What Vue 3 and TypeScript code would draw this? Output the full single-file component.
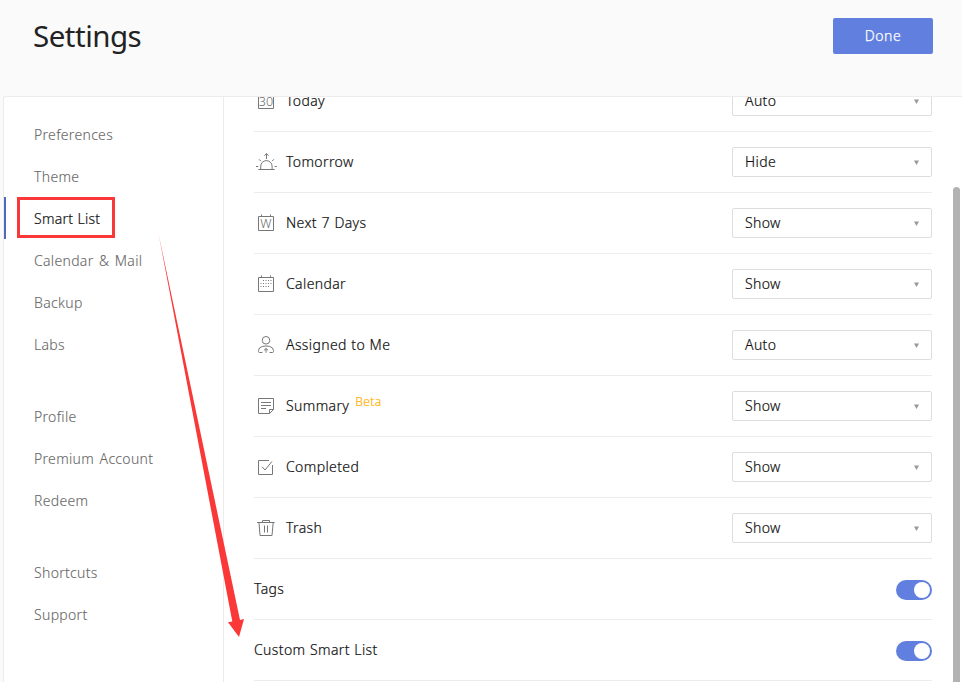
<script setup lang="ts">
import { ref } from 'vue'

interface SmartItem {
  icon: string
  label: string
  value: string
  beta?: boolean
}

const navGroups: string[][] = [
  ['Preferences', 'Theme', 'Smart List', 'Calendar & Mail', 'Backup', 'Labs'],
  ['Profile', 'Premium Account', 'Redeem'],
  ['Shortcuts', 'Support'],
]
const active = ref('Smart List')

const items: SmartItem[] = [
  { icon: 'today', label: 'Today', value: 'Auto' },
  { icon: 'tomorrow', label: 'Tomorrow', value: 'Hide' },
  { icon: 'week', label: 'Next 7 Days', value: 'Show' },
  { icon: 'calendar', label: 'Calendar', value: 'Show' },
  { icon: 'assigned', label: 'Assigned to Me', value: 'Auto' },
  { icon: 'summary', label: 'Summary', value: 'Show', beta: true },
  { icon: 'completed', label: 'Completed', value: 'Show' },
  { icon: 'trash', label: 'Trash', value: 'Show' },
]

const toggles = ref([
  { label: 'Tags', on: true },
  { label: 'Custom Smart List', on: true },
])

const paths: Record<string, string> = {
  today: 'M4.5 5.5h15v14h-15zM7.5 3.5v2M16.5 3.5v2',
  tomorrow:
    'M4.3 19.5h16.4M2 16.5h2.2M20.6 16.5h2.2M6.7 19.5v-3.2a5.7 5.7 0 0 1 11.4 0v3.2M5 9.3l1.8 1.8M19.9 9.3l-1.8 1.8M12.5 3.6v5.4M10.4 5.7l2.1-2.1 2.1 2.1',
  week: 'M4.5 5.5h15v14h-15zM7.5 3.5v2M16.5 3.5v2',
  calendar: 'M4.5 5.5h15v14h-15zM7.5 3.5v2M16.5 3.5v2',
  assigned:
    'M12 3.5a3.8 3.8 0 1 1 0 7.6a3.8 3.8 0 0 1 0-7.6zM8.4 19.5H5.6q-1.1 0-1.1-1.1v-.9q0-3 3.9-4.1M15.6 19.5h2.8q1.1 0 1.1-1.1v-.9q0-3-3.9-4.1M8.4 13.4q3.6-.8 7.2 0M12 19.7v-4.2M9.9 17.4l2.1-2 2.1 2',
  summary: 'M15.5 19.5h-11v-15h15v11zM15.5 19.5v-4h4M7 8.5h10M7 11.5h10M7 14.5h5',
  completed: 'M15 5.5H4.5v14h14V10M8 11.7l3 3.3 7-8.6',
  trash: 'M3 6.5h17.7M8.5 6.5v-2h7v2M5 6.5l1 13h12l1.2-13M10.5 9.5v7M13.5 9.5v7',
}

const dots = [
  [9.5, 8.5], [12, 8.5], [14.5, 8.5], [17, 8.5],
  [7, 11.5], [9.5, 11.5], [12, 11.5], [14.5, 11.5], [17, 11.5],
  [7, 14.5], [9.5, 14.5], [12, 14.5], [14.5, 14.5],
]
</script>

<template>
  <div class="app">
    <header class="header">
      <h1 class="title">Settings</h1>
      <button class="done">Done</button>
    </header>

    <div class="panel">
      <nav class="sidebar">
        <div v-for="(group, g) in navGroups" :key="g" class="group">
          <a
            v-for="name in group"
            :key="name"
            class="nav"
            :class="{ active: name === active }"
            @click="active = name"
          >{{ name }}</a>
        </div>
      </nav>

      <main class="content">
        <div class="list">
          <div v-for="item in items" :key="item.label" class="row">
            <svg class="icon" viewBox="0 0 24 24">
              <path :d="paths[item.icon]" />
              <text v-if="item.icon === 'today'" x="12" y="17" class="glyph">30</text>
              <text v-if="item.icon === 'week'" x="12" y="17" class="glyph">W</text>
              <template v-if="item.icon === 'calendar'">
                <rect v-for="(d, i) in dots" :key="i" class="dot" :x="d[0] - 0.5" :y="d[1] - 0.5" width="1" height="1" />
              </template>
            </svg>
            <span class="label">{{ item.label }}</span>
            <span v-if="item.beta" class="beta">Beta</span>
            <div class="select">
              <span>{{ item.value }}</span>
              <svg class="caret" viewBox="0 0 5 5"><path d="M0 .5h5L2.5 5z" /></svg>
            </div>
          </div>
          <div v-for="t in toggles" :key="t.label" class="row">
            <span>{{ t.label }}</span>
            <button class="toggle" :class="{ on: t.on }" :aria-label="t.label" @click="t.on = !t.on"><i class="knob"></i></button>
          </div>
        </div>
        <div class="scrollbar"></div>
      </main>
    </div>

    <div class="highlight"></div>
    <svg class="arrow" viewBox="0 0 962 682">
      <path d="M158.8 235L240 620l4-1L239 637 228 622.3l4.3-.8z" />
    </svg>
  </div>
</template>

<style>
body {
  margin: 0;
  overflow: hidden;
}
</style>

<style scoped>
.app {
  position: relative;
  display: flex;
  flex-direction: column;
  width: 962px;
  height: 682px;
  overflow: hidden;
  background: #fafafa;
  color: #111;
  font: 300 14px/20px 'Noto Sans', sans-serif;
  letter-spacing: 0.38px;
  word-spacing: 0.5px;
}
.header {
  display: flex;
  justify-content: space-between;
  align-items: flex-start;
  flex: none;
  box-sizing: border-box;
  height: 96px;
  padding: 18px 29px 0 33px;
}
.title {
  margin: 0;
  color: #222;
  font-size: 29.5px;
  line-height: 35px;
  font-weight: 400;
  letter-spacing: -0.5px;
}
.done {
  width: 100px;
  height: 36px;
  padding: 0;
  border: 0;
  border-radius: 2px;
  background: #617fde;
  color: #fff;
  font: inherit;
  letter-spacing: 0.6px;
  -webkit-text-stroke: 0.25px #fff;
}
.panel {
  display: flex;
  flex: 1;
  min-height: 0;
  margin-left: 3px;
  border: solid #ececec;
  border-width: 1px 0 0 1px;
  border-radius: 3px 0 0 0;
  background: #fff;
}
.sidebar {
  display: flex;
  flex-direction: column;
  gap: 30px;
  box-sizing: border-box;
  flex: none;
  width: 220px;
  padding-top: 16px;
  border-right: 1px solid #ececec;
  letter-spacing: 0.32px;
  word-spacing: 1.5px;
}
.nav {
  display: block;
  box-sizing: border-box;
  height: 42px;
  padding-left: 30px;
  line-height: 43px;
  color: #666;
  -webkit-text-stroke: 0.1px #666;
}
.nav.active {
  padding-left: 28px;
  border-left: 2px solid #4f69bb;
  color: #111;
  letter-spacing: 0.25px;
  word-spacing: 0.5px;
  -webkit-text-stroke: 0.2px #111;
}
.content {
  display: flex;
  flex: 1;
  min-width: 0;
  overflow: hidden;
  padding-left: 30px;
  -webkit-text-stroke: 0.2px;
}
.list {
  flex: none;
  width: 678px;
  margin-top: -26px;
}
.row {
  display: flex;
  align-items: center;
  box-sizing: border-box;
  height: 61px;
  border-bottom: 1px solid #ececec;
}
.icon {
  width: 24px;
  height: 24px;
  margin-right: 8px;
  fill: none;
  stroke: #777;
  stroke-width: 1;
}
.glyph {
  fill: #666;
  stroke: none;
  font-size: 12.5px;
  letter-spacing: 0;
  text-anchor: middle;
  -webkit-text-stroke: 0;
}
.dot {
  fill: #777;
  stroke: none;
}
.beta {
  margin: -8px 0 0 6px;
  color: #ffb000;
  font-size: 12px;
}
.select {
  display: flex;
  justify-content: space-between;
  align-items: center;
  box-sizing: border-box;
  width: 200px;
  height: 30px;
  margin-left: auto;
  padding: 0 12px;
  border: 1px solid #ddd;
  border-radius: 2px;
}
.caret {
  width: 5px;
  height: 5px;
  fill: #999;
}
.toggle {
  display: flex;
  width: 36px;
  height: 20px;
  margin: 1px 0 0 auto;
  padding: 2px;
  border: 0;
  border-radius: 10px;
  background: #ccc;
}
.toggle.on {
  justify-content: flex-end;
  background: #617fde;
}
.knob {
  width: 16px;
  height: 16px;
  border-radius: 50%;
  background: #fff;
}
.scrollbar {
  width: 7px;
  margin: 90px 0 -8px 21px;
  border-radius: 4px;
  background: #b2b2b2;
}
.highlight {
  position: absolute;
  left: 17px;
  top: 197px;
  box-sizing: border-box;
  width: 98px;
  height: 41px;
  border: 3px solid #fb3838;
}
.arrow {
  position: absolute;
  inset: 0;
  width: 962px;
  height: 682px;
  fill: #fb3838;
  pointer-events: none;
}
</style>
